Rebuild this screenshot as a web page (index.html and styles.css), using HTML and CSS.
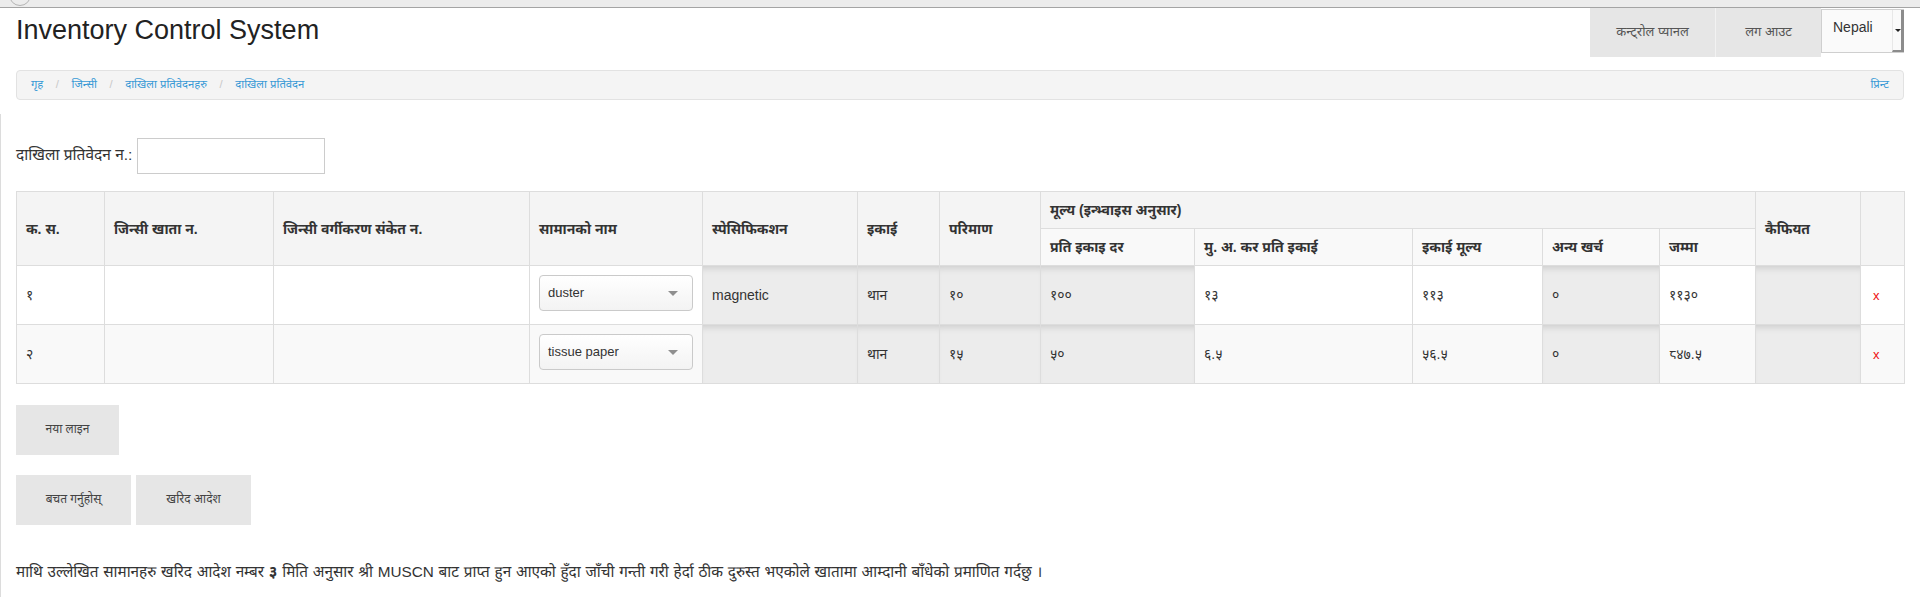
FILE: index.html
```html
<!DOCTYPE html>
<html lang="ne">
<head>
<meta charset="utf-8">
<title>Inventory Control System</title>
<link rel="stylesheet" href="styles.css">
</head>
<body>
<div class="topstrip"><span class="strip-circle"></span></div>
<header class="header">
  <h1 class="title">Inventory Control System</h1>
  <nav class="topnav">
    <a class="navbtn navbtn-cp" href="#">कन्ट्रोल प्यानल</a>
    <a class="navbtn navbtn-lo" href="#">लग आउट</a>
    <div class="langsel"><span class="langsel-text">Nepali</span><span class="langsel-btn"><span class="langsel-arrow"></span></span></div>
  </nav>
</header>
<div class="crumbbar">
  <ol class="crumbs">
    <li><a href="#">गृह</a></li>
    <li><a href="#">जिन्सी</a></li>
    <li><a href="#">दाखिला प्रतिवेदनहरु</a></li>
    <li><a href="#">दाखिला प्रतिवेदन</a></li>
  </ol>
  <a class="print" href="#">प्रिन्ट</a>
</div>
<main class="content">
  <div class="formrow">
    <label class="formlabel">दाखिला प्रतिवेदन न.:</label>
    <input class="textinput" type="text">
  </div>
  <table class="grid">
    <colgroup>
      <col class="w1"><col class="w2"><col class="w3"><col class="w4"><col class="w5"><col class="w6"><col class="w7">
      <col class="w8"><col class="w9"><col class="w10"><col class="w11"><col class="w12"><col class="w13"><col class="w14">
    </colgroup>
    <thead>
      <tr>
        <th rowspan="2">क. स.</th>
        <th rowspan="2">जिन्सी खाता न.</th>
        <th rowspan="2">जिन्सी वर्गीकरण संकेत न.</th>
        <th rowspan="2">सामानको नाम</th>
        <th rowspan="2">स्पेसिफिकशन</th>
        <th rowspan="2">इकाई</th>
        <th rowspan="2">परिमाण</th>
        <th colspan="5">मूल्य (इन्भ्वाइस अनुसार)</th>
        <th rowspan="2">कैफियत</th>
        <th rowspan="2"></th>
      </tr>
      <tr class="subhead">
        <th>प्रति इकाइ दर</th>
        <th>मु. अ. कर प्रति इकाई</th>
        <th>इकाई मूल्य</th>
        <th>अन्य खर्च</th>
        <th>जम्मा</th>
      </tr>
    </thead>
    <tbody>
      <tr>
        <td>१</td>
        <td></td>
        <td></td>
        <td><div class="select"><span>duster</span><span class="caret"></span></div></td>
        <td class="ro">magnetic</td>
        <td class="ro">थान</td>
        <td class="ro">१०</td>
        <td class="ro">१००</td>
        <td>१३</td>
        <td>११३</td>
        <td class="ro">०</td>
        <td>११३०</td>
        <td class="ro"></td>
        <td><a class="del" href="#">x</a></td>
      </tr>
      <tr class="alt">
        <td>२</td>
        <td></td>
        <td></td>
        <td><div class="select"><span>tissue paper</span><span class="caret"></span></div></td>
        <td class="ro"></td>
        <td class="ro">थान</td>
        <td class="ro">१५</td>
        <td class="ro">५०</td>
        <td>६.५</td>
        <td>५६.५</td>
        <td class="ro">०</td>
        <td>८४७.५</td>
        <td class="ro"></td>
        <td><a class="del" href="#">x</a></td>
      </tr>
    </tbody>
  </table>
  <div class="actions">
    <button class="btn btn-new" type="button">नया लाइन</button>
  </div>
  <div class="actions actions-2">
    <button class="btn btn-save" type="button">बचत गर्नुहोस्</button>
    <button class="btn btn-order" type="button">खरिद आदेश</button>
  </div>
  <p class="certify">माथि उल्लेखित सामानहरु खरिद आदेश नम्बर <b>३</b> मिति अनुसार श्री MUSCN बाट प्राप्त हुन आएको हुँदा जाँची गन्ती गरी हेर्दा ठीक दुरुस्त भएकोले खातामा आम्दानी बाँधेको प्रमाणित गर्दछु ।</p>
</main>
</body>
</html>
```

FILE: styles.css
```css
* { box-sizing: border-box; }
html, body { margin: 0; padding: 0; background: #fff; }
body {
  font-family: "Liberation Sans", "Noto Sans Devanagari", "Lohit Devanagari", Arial, sans-serif;
  font-size: 14px;
  color: #333;
  overflow: hidden;
}
a { text-decoration: none; }

.topstrip {
  position: relative;
  height: 8px;
  background: #ececec;
  border-bottom: 1px solid #a4a4a4;
  overflow: hidden;
}
.strip-circle {
  position: absolute;
  left: 9px;
  top: -16px;
  width: 22px;
  height: 22px;
  border: 1px solid #b4b4b4;
  border-radius: 50%;
}

.header {
  display: flex;
  justify-content: space-between;
  align-items: flex-start;
  padding: 0 16px;
  height: 62px;
}
.title {
  margin: 7px 0 0;
  font-size: 27px;
  line-height: 30px;
  font-weight: normal;
  color: #222;
}
.topnav {
  display: flex;
  align-items: flex-start;
}
.navbtn {
  display: block;
  height: 49px;
  line-height: 48px;
  background: #e6e6e6;
  color: #555;
  font-size: 13px;
  text-align: center;
}
.navbtn-cp { width: 125px; }
.navbtn-lo { width: 106px; border-left: 1px solid #f2f2f2; }
.langsel {
  display: flex;
  justify-content: space-between;
  margin-top: 1px;
  width: 83px;
  height: 44px;
  border: 1px solid #cfcfcf;
  border-right: none;
  background: #fafafa;
  color: #333;
  font-size: 14px;
}
.langsel-text { padding: 9px 0 0 11px; }
.langsel-btn {
  width: 12px;
  border-right: 3px solid #8c8c8c;
  border-bottom: 2px solid #8c8c8c;
  border-left: 1px solid #e8e8e8;
  position: relative;
}
.langsel-arrow {
  position: absolute;
  left: 2px;
  top: 19px;
  border-left: 3px solid transparent;
  border-right: 3px solid transparent;
  border-top: 3px solid #222;
}

.crumbbar {
  display: flex;
  justify-content: space-between;
  align-items: center;
  margin: 0 16px;
  height: 30px;
  padding: 0 14px;
  background: #f4f4f4;
  border: 1px solid #e2e2e2;
  border-radius: 4px;
  font-size: 11.3px;
}
.crumbs {
  display: flex;
  margin: 0;
  padding: 0;
  list-style: none;
}
.crumbs li + li::before {
  content: "/";
  color: #c8c8c8;
  padding: 0 12.5px;
}
.crumbs a, .print { color: #3a9ad6; }

.content {
  margin-top: 14px;
  border-left: 1px solid #dcdcdc;
  padding: 24px 16px 0 15px;
  min-height: 500px;
}
.formrow {
  display: flex;
  align-items: center;
  margin-bottom: 17px;
}
.formlabel { font-size: 15.5px; color: #333; margin-right: 5px; }
.textinput {
  width: 188px;
  height: 36px;
  border: 1px solid #cccccc;
  background: #fff;
  margin: 0;
}

.grid {
  width: 100%;
  table-layout: fixed;
  border-collapse: collapse;
  border: 1px solid #dddddd;
}
.w1 { width: 88px; } .w2 { width: 169px; } .w3 { width: 256px; } .w4 { width: 173px; }
.w5 { width: 155px; } .w6 { width: 82px; } .w7 { width: 101px; } .w8 { width: 154px; }
.w9 { width: 218px; } .w10 { width: 130px; } .w11 { width: 117px; } .w12 { width: 96px; }
.w13 { width: 105px; } .w14 { width: 44px; }

.grid th, .grid td {
  border: 1px solid #dddddd;
  padding: 8px 9px;
  text-align: left;
  vertical-align: middle;
}
.grid th {
  background: #f4f4f4;
  font-weight: bold;
  line-height: 20px;
  color: #333;
}
.grid .subhead th { background: #f9f9f9; }
.grid td {
  height: 59px;
  padding: 9px;
  line-height: 20px;
  background: #fff;
}
.grid tr.alt td { background: #f9f9f9; }
.grid td.ro, .grid tr.alt td.ro {
  background: #ececec;
  box-shadow: inset 0 7px 7px -5px rgba(0, 0, 0, 0.14);
}
.select {
  display: flex;
  justify-content: space-between;
  align-items: center;
  height: 36px;
  margin-bottom: 4px;
  padding: 0 14px 0 8px;
  border: 1px solid #cacaca;
  border-radius: 4px;
  background: linear-gradient(#ffffff, #f3f3f3);
  font-size: 13px;
  color: #333;
}
.caret {
  width: 0;
  height: 0;
  border-left: 5px solid transparent;
  border-right: 5px solid transparent;
  border-top: 5px solid #8f8f8f;
}
.del { color: #ee1111; font-size: 13px; margin-left: 3px; }

.actions {
  margin-top: 21px;
  display: flex;
  gap: 5px;
}
.actions-2 { margin-top: 20px; }
.btn {
  height: 50px;
  padding: 0 26px;
  border: none;
  background: #e6e6e6;
  color: #444;
  font-family: inherit;
  font-size: 12px;
  cursor: pointer;
}
.btn-new { width: 103px; }
.btn-save { width: 115px; }
.btn-order { width: 115px; }

.certify {
  margin: 36px 0 0;
  font-size: 15.3px;
  line-height: 22px;
  word-spacing: 0.5px;
  color: #333;
}
.certify b { font-weight: bold; }
```
